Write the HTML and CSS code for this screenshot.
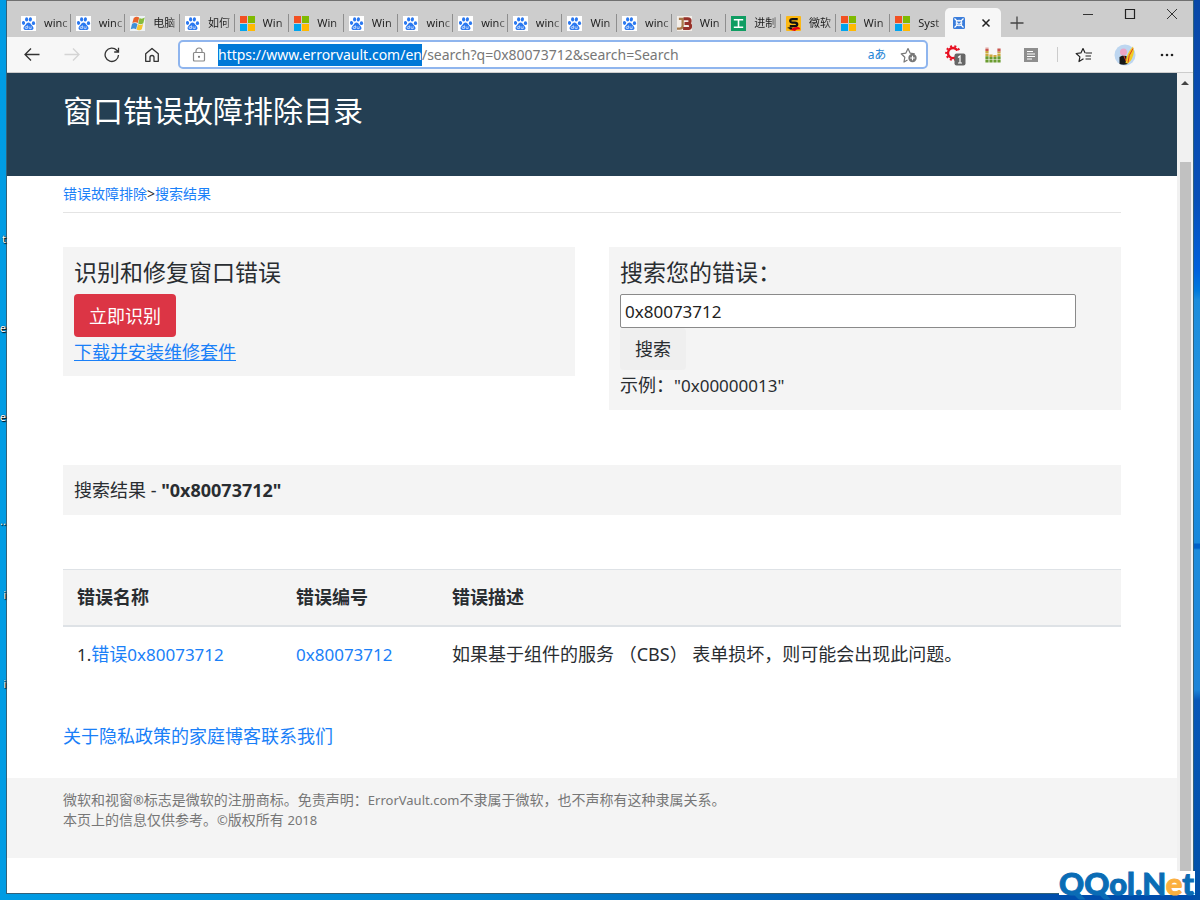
FILE: index.html
```html
<!DOCTYPE html>
<html lang="zh-CN">
<head>
<meta charset="utf-8">
<title>窗口错误故障排除目录</title>
<link rel="stylesheet" href="styles.css">
</head>
<body>
<svg class="defs" aria-hidden="true">
  <symbol id="paw" viewBox="0 0 16 16">
    <rect width="16" height="16" fill="#fff"/>
    <g fill="#2a78f0"><ellipse cx="2.7" cy="7.4" rx="1.7" ry="2.1" transform="rotate(-12 2.7 7.4)"/><ellipse cx="6" cy="3.6" rx="1.7" ry="2.300"/><ellipse cx="10" cy="3.6" rx="1.7" ry="2.300" transform="rotate(8 10 3.6)"/><ellipse cx="13.3" cy="7.6" rx="1.7" ry="2.1"/><path d="M8 7c1.500 0 2.200 1.200 3 2.200 1 1.200 2.600 2.200 2.300 4.100-.4 2.200-3 1.700-5.300 1.600-2.300.1-4.900.6-5.300-1.600-.3-1.900 1.300-2.900 2.300-4.100.8-1 1.500-2.200 3-2.200z"/></g>
    <path d="M6.800 10v3.400H5.400q-1 0-1-1t1-1h1.400M8.600 11v1.800q0 .7.700.7h1.500V11" fill="none" stroke="#fff" stroke-width=".7"/>
  </symbol>
  <symbol id="ms" viewBox="0 0 16 16">
    <path fill="#f25022" d="M0 0h7.500v7.500H0z"/><path fill="#7fba00" d="M8.500 0H16v7.500H8.500z"/><path fill="#00a4ef" d="M0 8.500h7.500V16H0z"/><path fill="#ffb900" d="M8.500 8.500H16V16H8.500z"/>
  </symbol>
</svg>
<div class="desktop">
  <div class="desk-labels" aria-hidden="true"><span>t</span><span>e</span><span>e</span><span class="low">..</span><span>i</span><span>i</span></div>
  <div class="window">
    <header class="tabstrip">
      <nav class="tabs">
        <a class="tab" href="#"><svg class="fav"><use href="#paw"/></svg><span>winc</span></a>
        <a class="tab" href="#"><svg class="fav"><use href="#paw"/></svg><span>winc</span></a>
        <a class="tab" href="#"><svg class="fav" viewBox="0 0 16 16"><rect width="16" height="16" fill="#eef2f5"/><path fill="#e8632b" d="M4 2q3-2 5.800-.3L8.300 7.500q-2.500-1.500-5.800 0z"/><path fill="#86bc3c" d="M10.200 2.200q2.800 1.500 5.500-.5l-1.500 6q-2.700 1.800-5.500.3z"/><path fill="#3f8fd6" d="M2.200 8.300q2.800-1.500 5.800.2l-1.500 5.700q-2.500-1.500-5.700 0z"/><path fill="#f7c52f" d="M8.500 8.800q3 1.500 5.500-.2l-1.500 5.600q-2.700 1.700-5.500.2z"/></svg><span>电脑</span></a>
        <a class="tab" href="#"><svg class="fav"><use href="#paw"/></svg><span>如何</span></a>
        <a class="tab" href="#"><svg class="fav"><use href="#ms"/></svg><span>Win</span></a>
        <a class="tab" href="#"><svg class="fav"><use href="#ms"/></svg><span>Win</span></a>
        <a class="tab" href="#"><svg class="fav"><use href="#paw"/></svg><span>Win</span></a>
        <a class="tab" href="#"><svg class="fav"><use href="#paw"/></svg><span>winc</span></a>
        <a class="tab" href="#"><svg class="fav"><use href="#paw"/></svg><span>winc</span></a>
        <a class="tab" href="#"><svg class="fav"><use href="#paw"/></svg><span>winc</span></a>
        <a class="tab" href="#"><svg class="fav"><use href="#paw"/></svg><span>Win</span></a>
        <a class="tab" href="#"><svg class="fav"><use href="#paw"/></svg><span>winc</span></a>
        <a class="tab" href="#"><svg class="fav" viewBox="0 0 16 16"><rect width="16" height="16" fill="#f3eee9"/><path d="M2 3h4v7.500q0 3-3 3H0" fill="none" stroke="#a87a4a" stroke-width="2.400"/><path d="M7 3h4.500q2.500 0 2.500 2.400T11.500 8q3 0 3 2.800T12 13.200H6.500M8 8h4" fill="none" stroke="#963129" stroke-width="3.200"/></svg><span>Win</span></a>
        <a class="tab" href="#"><svg class="fav" viewBox="0 0 16 16"><rect width="16" height="16" fill="#0f9d62"/><path d="M3 4h10M8 4v8M3 12h10" stroke="#fff" stroke-width="1.700" fill="none"/></svg><span>进制</span></a>
        <a class="tab" href="#"><svg class="fav" viewBox="0 0 16 16"><rect width="16" height="16" rx="1" fill="#fcb813"/><path d="M12.500 3.200H7q-2.500 0-2.500 1.900T7 7h2.500q2.500 0 2.500 1.900t-2.500 1.900H4" fill="none" stroke="#111" stroke-width="2.400"/><path d="M1 13q4 1 6-1l-1 3zM1 12h5v2z" fill="#111"/><path d="M5 15q3-4 9-3l1.500 2-4 .5-2 1.500z" fill="#e60012"/></svg><span>微软</span></a>
        <a class="tab" href="#"><svg class="fav"><use href="#ms"/></svg><span>Win</span></a>
        <a class="tab" href="#"><svg class="fav"><use href="#ms"/></svg><span>Syst</span></a>
      </nav>
      <div class="tab-active">
        <svg width="12" height="12" viewBox="0 0 12 12"><rect width="12" height="12" rx="1.500" fill="#3a7ddb"/><circle cx="6" cy="6" r="3.300" fill="#e6effc"/><path d="M1.500 1.500l9 9M10.500 1.500l-9 9" stroke="#fff" stroke-width="1.200"/><path d="M4.500 4.500l3 3M7.500 4.500l-3 3" stroke="#3a7ddb" stroke-width="1.300"/></svg>
        <button aria-label="关闭标签页"><svg width="10" height="10" viewBox="0 0 10 10"><path d="M1.500 1.500l7 7M8.500 1.500l-7 7" stroke="#222" stroke-width="1.500"/></svg></button>
      </div>
      <div class="strip-end">
        <button class="new-tab" aria-label="新建标签页"><svg width="14" height="14" viewBox="0 0 14 14"><path d="M7 .5v13M.5 7h13" stroke="#444" stroke-width="1.300"/></svg></button>
        <div class="controls">
          <button aria-label="最小化"><svg width="12" height="12" viewBox="0 0 12 12"><path d="M1 6.500h10" stroke="#333"/></svg></button>
          <button aria-label="最大化"><svg width="12" height="12" viewBox="0 0 12 12"><path d="M1.500 1.500h9v9h-9z" fill="none" stroke="#222" stroke-width="1.200"/></svg></button>
          <button aria-label="关闭"><svg width="12" height="12" viewBox="0 0 12 12"><path d="M1 1l10 10M11 1L1 11" stroke="#333"/></svg></button>
        </div>
      </div>
    </header>
    <div class="toolbar">
      <button class="tool" aria-label="后退"><svg width="16" height="16" viewBox="0 0 16 16"><path d="M15.500 7.500H1M7 1.500l-6 6 6 6" fill="none" stroke="#333" stroke-width="1.300"/></svg></button>
      <button class="tool" aria-label="前进" disabled><svg width="16" height="16" viewBox="0 0 16 16"><path d="M.5 7.500H15M9 1.500l6 6-6 6" fill="none" stroke="#d4d4d4" stroke-width="1.300"/></svg></button>
      <button class="tool" aria-label="刷新"><svg width="16" height="16" viewBox="0 0 16 16"><path d="M14.500 8A6.700 6.700 0 1 1 12.800 3.300L14.500 5M14.500.8V5h-4.300" fill="none" stroke="#333" stroke-width="1.300"/></svg></button>
      <button class="tool" aria-label="主页"><svg width="16" height="16" viewBox="0 0 16 16"><path d="M1.700 6.800L8 1.500l6.300 5.300v7.500H10V10.500a2 2 0 0 0-4 0v3.800H1.700z" fill="none" stroke="#333" stroke-width="1.300" stroke-linejoin="round"/></svg></button>
      <div class="address">
        <svg width="14" height="16" viewBox="0 0 14 16"><path d="M4 5.500V4a3 3 0 0 1 6 0v1.500M2.500 5.500h9q1 0 1 1v6.500q0 1-1 1h-9q-1 0-1-1V6.500q0-1 1-1z" fill="none" stroke="#888" stroke-width="1.200"/><circle cx="7" cy="9.800" r="1.100" fill="#777"/></svg>
        <input id="url" class="url" aria-label="地址栏" spellcheck="false" value="https://www.errorvault.com/en/search?q=0x80073712&amp;search=Search">
        <button class="translate" aria-label="翻译">aあ</button>
        <button class="star" aria-label="收藏"><svg width="18" height="16" viewBox="0 0 18 16"><path d="M7.500 13L4 15l.8-4.700L1.200 6.800l4.700-.7L8 1.500l2.100 4.600 4.700.7" fill="none" stroke="#777" stroke-width="1.200" stroke-linejoin="round"/><circle cx="12.500" cy="11" r="4.200" fill="#777"/><path d="M12.500 8.700v4.600M10.200 11h4.600" stroke="#fff" stroke-width="1.100"/></svg></button>
      </div>
      <div class="tools">
        <button class="tool" aria-label="扩展，1 条通知"><svg width="22" height="22" viewBox="0 0 22 22"><circle cx="9" cy="9" r="5" fill="none" stroke="#e81123" stroke-width="2.400" stroke-dasharray="24 8" transform="rotate(50 9 9)"/><circle cx="9" cy="9" r="6.800" fill="none" stroke="#e81123" stroke-width="2" stroke-dasharray="2 2.270" stroke-dashoffset="1"/><path d="M12 7h6v5h-6z" fill="#f7f7f7"/><rect x="10.500" y="9.500" width="11" height="12" rx="2" fill="#666"/><path d="M14 13.500l2-1.500v7M14 19h4" fill="none" stroke="#fff" stroke-width="1.200"/></svg></button>
        <button class="tool" aria-label="音量均衡"><svg width="16" height="16" viewBox="0 0 16 16"><g stroke-width="3.200" stroke-dasharray="2.500 .4"><path d="M2 15.500V9M6 15.500V10M10 15.500V10M14 15.500V9" stroke="#6a9c2f"/><path d="M2 9V4M6 10V7M10 10V8M14 9V4.500" stroke="#cba83e"/><path d="M2 4V.8M14 4.500V1" stroke="#c9564f"/></g></svg></button>
        <button class="tool" aria-label="阅读"><svg width="16" height="16" viewBox="0 0 16 16"><path fill="#8e8e8e" d="M1 1h14v14H1z"/><path d="M4 4.500h6M4 7h8M4 9.500h8M4 12h5" stroke="#fff" stroke-width="1.200"/></svg></button>
        <span class="divider"></span>
        <button class="tool" aria-label="收藏夹"><svg width="18" height="16" viewBox="0 0 18 16"><path d="M8.500 11.800L4 14.500l.9-4.600L1.200 6.500l4.700-.6L8 1.500l2.100 4.400" fill="none" stroke="#222" stroke-width="1.200" stroke-linejoin="round"/><path d="M10.500 6H17M10.500 9H16M10.500 12H16" stroke="#222" stroke-width="1.200"/></svg></button>
        <button class="tool profile" aria-label="个人资料"><svg width="22" height="22" viewBox="0 0 22 22"><circle cx="11" cy="11" r="10.500" fill="#bdd6f0"/><path d="M5.500 20v-7l3-1.500 4 .5 1 8q-4 1.500-8 0z" fill="#171717"/><circle cx="9.500" cy="8" r="3.500" fill="#eba4c5"/><path d="M11.500 19q1-10 7.500-16.500l1 5q-1 8-6 12z" fill="#f2cb25"/><path d="M14 18.500q0-7 5-14M10 12l2 5" stroke="#dc3b25" stroke-width="1" fill="none"/></svg></button>
        <button class="tool" aria-label="更多"><svg width="14" height="4" viewBox="0 0 14 4"><g fill="#222"><circle cx="2" cy="2" r="1.300"/><circle cx="7" cy="2" r="1.300"/><circle cx="12" cy="2" r="1.300"/></g></svg></button>
      </div>
    </div>
    <div class="viewport">
      <main class="page">
        <div class="hero"><h1>窗口错误故障排除目录</h1></div>
        <div class="content">
          <nav class="crumbs"><a href="#">错误故障排除</a>&gt;<a href="#">搜索结果</a></nav>
          <div class="cards">
            <section class="card">
              <h2>识别和修复窗口错误</h2>
              <button class="btn btn-danger">立即识别</button>
              <p><a class="kit" href="#">下载并安装维修套件</a></p>
            </section>
            <form class="card" onsubmit="return false">
              <h2><label for="q">搜索您的错误：</label></h2>
              <input id="q" class="query" type="text" value="0x80073712">
              <button class="btn">搜索</button>
              <p>示例：<span class="code">"0x00000013"</span></p>
            </form>
          </div>
          <div class="result-bar">搜索结果 - <b>"0x80073712"</b></div>
          <table class="errors">
            <thead><tr><th class="c-name">错误名称</th><th class="c-code">错误编号</th><th>错误描述</th></tr></thead>
            <tbody><tr><td><span class="code">1.</span><a href="#">错误<span class="code">0x80073712</span></a></td><td><a class="code" href="#">0x80073712</a></td><td>如果基于组件的服务 （CBS） 表单损坏，则可能会出现此问题。</td></tr></tbody>
          </table>
          <nav class="links"><a href="#">关于</a><a href="#">隐私政策</a><a href="#">的家庭</a><a href="#">博客</a><a href="#">联系我们</a></nav>
        </div>
        <footer class="footer">
          <p>微软和视窗<span class="latin">®</span>标志是微软的注册商标。免责声明：<span class="latin">ErrorVault.com</span>不隶属于微软，也不声称有这种隶属关系。</p>
          <p>本页上的信息仅供参考。<span class="latin">©</span>版权所有 <span class="latin">2018</span></p>
        </footer>
      </main>
      <div class="scrollbar" aria-hidden="true"><svg class="arrow" width="8" height="5" viewBox="0 0 8 5"><path d="M0 5l4-4 4 4z" fill="#444"/></svg><span class="thumb"></span></div>
    </div>
  </div>
  <div class="watermark">QQol.N<span>e</span>t</div>
</div>
<script>
const url = document.getElementById('url');
url.focus();
url.setSelectionRange(0, 'https://www.errorvault.com/en'.length);
</script>
</body>
</html>
```

FILE: styles.css
```css
* { box-sizing: border-box; }
body {
  margin: 0;
  font-family: "Noto Sans", "Noto Sans CJK SC", sans-serif;
  font-size: 18px;
  line-height: 28px;
  color: #292d31;
}
h1, h2, p { margin: 0; font-weight: 400; }
a { color: #1a80f8; text-decoration: none; }
button { border: 0; padding: 0; background: none; font: inherit; color: inherit; }
svg { display: block; }
.defs { position: absolute; width: 0; height: 0; }
.code { font-size: 17px; }

.desktop {
  position: relative;
  display: flex;
  min-height: 100vh;
  padding: 0 7px 7px;
  overflow: hidden;
  background:
    linear-gradient(#0848a8 0, #0850b8 200px, #0060dc 270px, #0078dc 290px, #1c8cdc 300px, #2494e0 400px, #1888dc 543px, #0060c8 544px, #0060c8 548px, #1c8cdc 550px, #1c84d8 690px, #0858b8 700px, #0050a8 100%) right / 7px 100% no-repeat,
    linear-gradient(90deg, #009ce4, #0084d0 40%, #0050ac 80%, #004cac);
}
.desk-labels {
  position: absolute;
  left: 0;
  top: 231px;
  display: grid;
  grid-template-columns: 6px;
  grid-auto-rows: 89px;
  justify-items: end;
  font-size: 11px;
  line-height: 16px;
  color: #fff;
  text-shadow: 0 0 1px #000, 1px 1px 1px #000;
}
.low { padding-top: 15px; }
.window {
  flex: 1;
  min-width: 0;
  display: flex;
  flex-direction: column;
  background: #fff;
  outline: 1px solid #31617a;
  border-top: 1px solid #707070;
}

.tabstrip { display: flex; height: 36px; padding-left: 9px; background: #cdcdcd; }
.tabs { flex: 1; min-width: 0; display: flex; align-items: center; padding-top: 8px; }
.tab {
  flex: 1;
  min-width: 0;
  display: flex;
  align-items: center;
  gap: 8px;
  height: 18px;
  padding: 0 0 0 5px;
  border-right: 1px solid #8e8e8e;
  font-size: 11px;
  line-height: 18px;
  color: #222;
}
.tab:last-child { border-color: transparent; }
.tab span {
  flex: 1;
  white-space: nowrap;
  -webkit-mask-image: linear-gradient(90deg, #000 60%, rgba(0, 0, 0, .3));
  mask-image: linear-gradient(90deg, #000 60%, rgba(0, 0, 0, .3));
}
.fav { flex: none; width: 15px; height: 15px; }
.tab-active {
  width: 56px;
  margin-top: 7px;
  padding: 0 10px 0 8px;
  display: flex;
  align-items: center;
  justify-content: space-between;
  background: #f7f7f7;
  border-radius: 5px 5px 0 0;
}
.strip-end { width: 192px; display: flex; justify-content: space-between; }
.new-tab { width: 32px; padding: 8px 9px 0; }
.controls { display: flex; height: 26px; }
.controls button { width: 42px; display: grid; place-items: center; }

.toolbar {
  display: flex;
  align-items: center;
  height: 36px;
  padding-left: 5px;
  background: #f7f7f7;
  border-bottom: 1px solid #ccc;
}
.tool { width: 40px; height: 34px; display: grid; place-items: center; }
.address {
  flex: 1;
  min-width: 0;
  height: 29px;
  margin-left: 6px;
  padding: 0 1px 0 12px;
  display: flex;
  align-items: center;
  background: #fff;
  border: 2px solid #8fb5ee;
  border-radius: 5px;
}
.url {
  flex: 1;
  min-width: 0;
  margin-left: 12px;
  padding: 0;
  border: 0;
  outline: 0;
  background: none;
  font: 14px/22px "Noto Sans", sans-serif;
  color: #777;
  caret-color: transparent;
}
.url::selection { background: #0078d7; color: #fff; }
.translate { width: 32px; font-size: 12px; line-height: 20px; color: #2384d6; }
.star { width: 32px; height: 24px; display: grid; place-items: center; }
.tools { display: flex; align-items: center; padding: 0 6px 0 8px; }
.tools .tool { width: 38px; }
.tools .tool:last-child { width: 40px; }
.tools .profile { width: 44px; }
.divider { width: 1px; height: 15px; margin: 0 7px; background: #ccc; }

.viewport { flex: 1; display: flex; }
.page { flex: 1; min-width: 0; }
.hero { min-height: 103px; padding: 17px 56px; background: #243f53; color: #fff; }
.hero h1 { font-size: 30px; line-height: 42px; }
.content { padding: 0 56px; }
.crumbs { padding: 8px 0; border-bottom: 1px solid #e4e4e4; font-size: 14px; line-height: 20px; }
.cards { display: grid; grid-template-columns: 1fr 1fr; gap: 34px; align-items: start; margin: 34px 0 55px; }
.card { display: flex; flex-direction: column; align-items: flex-start; padding: 9px 11px 10px; background: #f4f4f4; }
.card h2 { font-size: 23px; line-height: 32px; margin-bottom: 6px; }
.card p { padding-top: 1px; }
.btn { height: 42px; padding: 0 15px; border-radius: 4px; background: #efefef; }
.btn-danger { height: 43px; background: #dc3545; color: #fff; }
.kit { text-decoration: underline; }
.query {
  width: 93%;
  height: 34px;
  padding: 0 4px;
  border: 1px solid #8a8a8a;
  border-radius: 2px;
  font: 17px/28px "Noto Sans", sans-serif;
  color: #222;
}
.result-bar { padding: 11px; background: #f4f4f4; }
.errors { width: 100%; margin-top: 54px; border-collapse: collapse; table-layout: fixed; text-align: left; }
.errors th, .errors td { height: 56px; padding: 0 14px; }
.errors th { background: #f4f4f4; border-top: 1px solid #dee2e6; border-bottom: 2px solid #dee2e6; }
.c-name { width: 219px; }
.c-code { width: 156px; }
.links { margin: 40px 0 28px; }
.footer { min-height: 80px; padding: 12px 56px; background: #f4f4f4; font-size: 14px; line-height: 20px; color: #777; }
.latin { font-size: 13px; }
.scrollbar { width: 16px; display: flex; flex-direction: column; align-items: center; background: #f1f1f1; }
.arrow { margin: 7px 0; }
.thumb { flex: 1; width: 11px; margin-top: 70px; background: #c1c1c1; }
.watermark {
  position: absolute;
  right: 5px;
  bottom: 5px;
  width: 136px;
  height: 24px;
  background: #fff;
  font: 900 31px/24px Lato, sans-serif;
  -webkit-text-stroke: 1px currentColor;
  color: #0a6cb5;
}
.watermark span { color: #fbb040; }
```
